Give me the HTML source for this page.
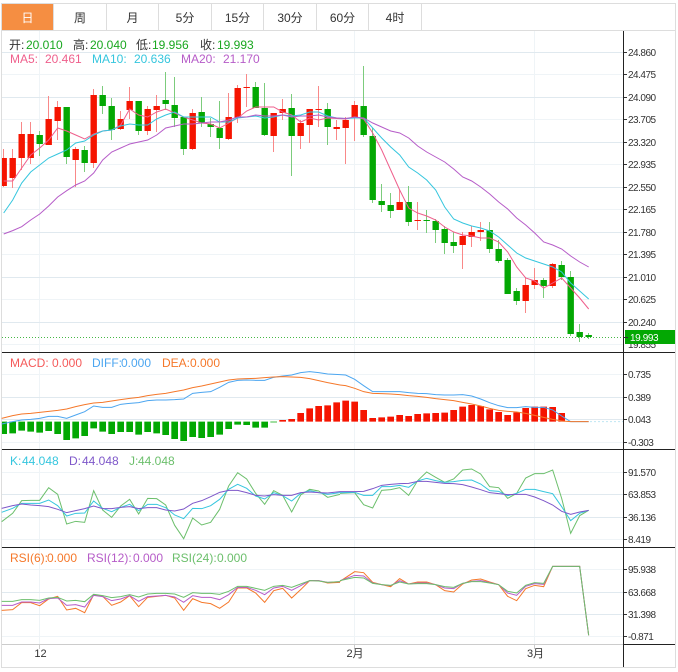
<!DOCTYPE html>
<html><head><meta charset="utf-8"><style>
html,body{margin:0;padding:0;background:#fff;width:678px;height:672px;overflow:hidden}
svg{display:block;font-family:"Liberation Sans","Noto Sans CJK SC",sans-serif}
.a text{font-size:10px;letter-spacing:-.5px;fill:#333}
.h text{font-size:12px}
.t text{font-size:12px;fill:#333;text-anchor:middle}
.l{fill:none}
</style></head><body>
<svg width="678" height="672" viewBox="0 0 678 672" xmlns="http://www.w3.org/2000/svg">
<!-- frame -->
<rect x="1.5" y="3.5" width="674" height="664" fill="#fff" stroke="#ddd"/>
<!-- tabs -->
<rect x="2" y="4" width="51" height="26" fill="#f58e42"/>
<path d="M53.5 4V30M106.5 4V30M158.5 4V30M211.5 4V30M263.5 4V30M316.5 4V30M368.5 4V30M421.5 4V30M2 30.5H675" stroke="#ddd" fill="none"/>
<g class="t">
<text x="27.5" y="22" style="fill:#fff">日</text><text x="80" y="22">周</text><text x="132.5" y="22">月</text><text x="185" y="22">5分</text><text x="237.5" y="22">15分</text><text x="290" y="22">30分</text><text x="342.5" y="22">60分</text><text x="395" y="22">4时</text>
</g>
<!-- grid -->
<path d="M39.5 31V645M354.5 31V645M534.5 31V645M2 74.5H623M2 119.5H623M2 164.5H623M2 209.5H623M2 254.5H623M2 299.5H623M2 344.5H623M2 374.5H623M2 442.5H623M2 472.5H623M2 539.5H623M2 569.5H623M2 636.5H623" stroke="#eff4f7" fill="none"/>
<path d="M2 52.5H623M2 97.5H623M2 142.5H623M2 187.5H623M2 232.5H623M2 277.5H623M2 322.5H623M2 397.5H623M2 419.5H623M2 494.5H623M2 517.5H623M2 592.5H623M2 614.5H623" stroke="#e0e9ef" fill="none"/>
<!-- wicks -->
<path stroke="#f98888" fill="none" d="M3.5 149V187M12.5 149V188M21.5 122V170M30.5 122V164M48.5 96V145M57.5 101V140M75.5 147V187M93.5 89V168M120.5 111V130M129.5 87V119M147.5 106V135M156.5 95V132M192.5 109V150M228.5 93V140M237.5 85V123M246.5 74V107M273.5 113V152M282.5 99V120M300.5 120V149M309.5 109V143M318.5 86V127M336.5 120V140M345.5 117V164M354.5 101V141M399.5 190V210M417.5 202V230M462.5 232V269M471.5 226V247M480.5 222V241M525.5 277V313M534.5 268V289M552.5 263V288"/>
<path stroke="#7ccc7c" fill="none" d="M39.5 131V156M66.5 107V164M84.5 146V172M102.5 86V114M111.5 98V140M138.5 101V135M165.5 72V110M174.5 77V127M183.5 117V155M201.5 97V127M210.5 118V137M219.5 101V149M255.5 82V108M264.5 83V136M291.5 94V176M327.5 103V145M363.5 66V137M372.5 128V203M381.5 184V212M390.5 193V218M408.5 186V226M426.5 210V233M435.5 219V243M444.5 226V254M453.5 232V253M489.5 222V253M498.5 240V263M507.5 258V294M516.5 288V305M543.5 278V298M561.5 261V280M570.5 271V336M579.5 324V342M588.5 333V339"/>
<!-- bodies -->
<path fill="#f51400" d="M2 158H6.9V186H2zM9.5 158h6.4V178h-6.4zM18.5 134h6.4V158h-6.4zM27.5 134h6.4V158h-6.4zM45.5 119h6.4V145h-6.4zM54.5 107h6.4V121h-6.4zM72.5 149h6.4V160h-6.4zM90.5 95h6.4V163h-6.4zM117.5 119h6.4V129h-6.4zM126.5 101h6.4V110h-6.4zM144.5 109h6.4V131h-6.4zM153.5 106h6.4V110h-6.4zM189.5 113h6.4V149h-6.4zM225.5 117h6.4V139h-6.4zM234.5 88h6.4V118h-6.4zM243.5 87h6.4V88h-6.4zM270.5 113h6.4V136h-6.4zM279.5 109h6.4V113h-6.4zM297.5 123h6.4V136h-6.4zM306.5 109h6.4V125h-6.4zM315.5 109h6.4V110h-6.4zM333.5 127h6.4V129h-6.4zM342.5 120h6.4V128h-6.4zM351.5 105h6.4V118h-6.4zM396.5 202h6.4V210h-6.4zM414.5 220h6.4V221h-6.4zM459.5 236h6.4V245h-6.4zM468.5 232h6.4V237h-6.4zM477.5 230h6.4V232h-6.4zM522.5 285h6.4V301h-6.4zM531.5 280h6.4V285h-6.4zM549.5 264h6.4V286h-6.4z"/>
<path fill="#03a803" d="M36.5 135h6.4V144h-6.4zM63.5 107h6.4V157h-6.4zM81.5 150h6.4V163h-6.4zM99.5 95h6.4V106h-6.4zM108.5 106h6.4V130h-6.4zM135.5 101h6.4V131h-6.4zM162.5 100h6.4V104h-6.4zM171.5 105h6.4V118h-6.4zM180.5 117h6.4V149h-6.4zM198.5 112h6.4V123h-6.4zM207.5 124h6.4V127h-6.4zM216.5 128h6.4V138h-6.4zM252.5 87h6.4V108h-6.4zM261.5 108h6.4V135h-6.4zM288.5 108h6.4V136h-6.4zM324.5 109h6.4V127h-6.4zM360.5 106h6.4V135h-6.4zM369.5 136h6.4V200h-6.4zM378.5 201h6.4V205h-6.4zM387.5 205h6.4V211h-6.4zM405.5 202h6.4V222h-6.4zM423.5 220h6.4V221h-6.4zM432.5 221h6.4V230h-6.4zM441.5 229h6.4V243h-6.4zM450.5 242h6.4V246h-6.4zM486.5 230h6.4V249h-6.4zM495.5 249h6.4V261h-6.4zM504.5 260h6.4V294h-6.4zM513.5 291h6.4V301h-6.4zM540.5 280h6.4V286h-6.4zM558.5 265h6.4V277h-6.4zM567.5 277h6.4V334h-6.4zM576.5 332h6.4V337h-6.4zM585.5 335h6.4V337h-6.4z"/>
<!-- MA -->
<g class="l" stroke-width="1">
<polyline stroke="#ef5f8c" points="3.7,181 12.7,181 21.7,168 30.7,155 39.7,148 48.7,140 57.7,128 66.7,131 75.7,135 84.7,139 93.7,134 102.7,131 111.7,130 120.7,125 129.7,109 138.7,115 147.7,117 156.7,112 165.7,109 174.7,113 183.7,117 192.7,120 201.7,123 210.7,124 219.7,128 228.7,123 237.7,118 246.7,111 255.7,107 264.7,107 273.7,107 282.7,112 291.7,115 300.7,122 309.7,118 318.7,120 327.7,118 336.7,118.5 345.7,119 354.7,117 363.7,119 372.7,133 381.7,150 390.7,170 399.7,190 408.7,208 417.7,213 426.7,216 435.7,220 444.7,227 453.7,232 462.7,235 471.7,236 480.7,238 489.7,238 498.7,242 507.7,252 516.7,267 525.7,278 534.7,281 543.7,288 552.7,283 561.7,278 570.7,288 579.7,298 588.7,309"/>
<polyline stroke="#35c6de" points="3.7,213 12.7,200 21.7,183 30.7,172 39.7,165 48.7,158 57.7,154 66.7,150 75.7,143 84.7,141 93.7,135 102.7,131 111.7,130 120.7,126 129.7,124 138.7,125 147.7,125 156.7,119 165.7,115 174.7,112 183.7,117 192.7,117 201.7,117 210.7,117 219.7,122 228.7,122 237.7,118 246.7,117 255.7,116 264.7,118 273.7,117 282.7,115 291.7,116 300.7,115 309.7,112 318.7,112 327.7,116 336.7,118 345.7,118.5 354.7,118 363.7,118 372.7,128 381.7,138 390.7,147 399.7,155 408.7,167 417.7,173 426.7,180 435.7,190 444.7,207 453.7,219 462.7,223 471.7,226 480.7,228 489.7,231 498.7,237 507.7,245 516.7,253 525.7,258 534.7,261 543.7,264 552.7,267 561.7,272 570.7,283 579.7,291 588.7,299"/>
<polyline stroke="#b65cc8" points="3.7,234 12.7,230.6 21.7,226.7 30.7,220 39.7,214 48.7,206 57.7,197 66.7,190.7 75.7,185 84.7,181 93.7,173 102.7,160 111.7,152 120.7,148 129.7,144 138.7,142 147.7,140 156.7,135 165.7,128 174.7,126 183.7,124 192.7,124 201.7,123 210.7,122 219.7,122 228.7,120 237.7,117 246.7,117 255.7,115 264.7,116 273.7,116 282.7,115 291.7,117 300.7,116 309.7,116 318.7,115 327.7,117 336.7,118 345.7,118.5 354.7,117 363.7,118 372.7,123 381.7,127 390.7,131 399.7,133 408.7,138 417.7,146 426.7,152 435.7,157 444.7,162 453.7,169 462.7,177 471.7,181 480.7,187 489.7,194 498.7,202 507.7,209 516.7,218 525.7,225 534.7,233 543.7,242 552.7,245 561.7,249 570.7,256 579.7,262 588.7,267"/>
</g>
<!-- last price dotted -->
<path d="M2 337.5H623" stroke="#45b845" stroke-dasharray="1 2" fill="none"/>
<!-- MACD histogram + lines -->
<g transform="translate(0,350) scale(.33333)">
<path fill="#03a803" d="M6 215H21V252H6zM28 215h20V250H28zM55 215h20V242H55zM82 215h20V245H82zM109 215h20V248H109zM136 215h20V243H136zM163 215h20V252H163zM190 215h20V270H190zM217 215h20V265H217zM244 215h20V258H244zM271 215h20V235H271zM298 215h20V245H298zM325 215h20V252H325zM352 215h20V246H352zM379 215h20V246H379zM406 215h20V254H406zM433 215h20V246H433zM460 215h20V250H460zM487 215h20V255H487zM514 215h20V267H514zM541 215h20V273H541zM568 215h20V261H568zM595 215h20V264H595zM622 215h20V261H622zM649 215h20V254H649zM676 215h20V237H676zM703 215h20V224H703zM730 215h20V225H730zM757 215h20V233H757zM784 215h20V233H784zM811 215h20V217H811z"/>
<path fill="#f51400" d="M838 210h20V215H838zM865 207h20V215H865zM892 189h20V215H892zM919 175h20V215H919zM946 168h20V215H946zM973 166h20V215H973zM1000 157h20V215H1000z"/>
<polyline class="l" stroke="#4ca6f0" stroke-width="3" points="5,222 38,215 65,210 92,208 119,205 146,199 173,199 200,205 227,195 254,185 281,168 308,172 335,172 362,163 389,160 416,158 443,152 470,150 497,150 524,149 551,147 578,130 605,127 632,125 659,112 686,97 713,91 740,90 767,91 794,91 821,82 848,78 875,75 902,68 929,65 956,68 983,72 1020,74"/>
<polyline class="l" stroke="#f5782a" stroke-width="3" points="5,205 38,197 65,192 92,190 119,187 146,184 173,181 200,177 227,170 254,164 281,159 308,157 335,153 362,149 389,145 416,142 443,137 470,133 497,130 524,125 551,120 578,113 605,108 632,102 659,96 686,90 713,87 740,86 767,85 794,83 821,81 848,80 875,81 902,82 929,86 956,92 983,98 1020,105"/>
</g>
<g transform="translate(340,350) scale(.33333)">
<path fill="#f51400" d="M7 152h20V215H7zM34 155h20V215H34zM61 180h20V215H61zM88 204h20V215H88zM115 202h20V215H115zM142 200h20V215H142zM169 195h20V215H169zM196 198h20V215H196zM223 192h20V215H223zM250 190h20V215H250zM277 189h20V215H277zM304 188h20V215H304zM331 180h20V215H331zM358 170h20V215H358zM385 165h20V215H385zM412 168h20V215H412zM439 178h20V215H439zM466 186h20V215H466zM493 195h20V215H493zM520 187h20V215H520zM547 174h20V215H547zM574 170h20V215H574zM601 170h20V215H601zM628 171h20V215H628zM655 189h20V215H655z"/>
<polyline class="l" stroke="#4ca6f0" stroke-width="3" points="0,74 17,75 44,88 71,107 98,125 125,125 152,125 179,125 206,128 233,130 260,131 287,134 314,135 341,135 368,134 395,138 422,147 449,158 476,167 503,173 530,173 557,170 584,172 611,172 638,180 665,198 692,215 719,215 746,215"/>
<polyline class="l" stroke="#f5782a" stroke-width="3" points="0,105 17,107 44,115 71,125 98,130 125,131 152,132 179,134 206,137 233,139 260,142 287,146 314,149 341,152 368,157 395,162 422,168 449,175 476,181 503,184 530,186 557,190 584,196 611,202 638,208 665,213 692,215 719,215 746,215"/>
<path d="M750 215H850" stroke="#bfe6f3" stroke-width="3" stroke-dasharray="6 6" fill="none"/>
</g>
<!-- KDJ -->
<g class="l" stroke-width="3" transform="translate(0,450) scale(.33333)">
<polyline stroke="#6cbf6c" points="5,215 38,190 65,152 92,151 119,151 146,113 173,133 200,222 227,214 254,217 281,122 308,180 335,202 362,168 389,148 416,192 443,145 470,146 497,165 524,226 551,266 578,204 605,225 632,217 659,178 686,108 713,68 740,87 767,130 794,163 821,122 848,136 875,186 902,135 929,118 956,123 983,142 1020,133"/>
<polyline stroke="#35c6de" points="5,187 38,175 65,160 92,160 119,160 146,150 173,167 200,198 227,190 254,189 281,153 308,175 335,185 362,172 389,163 416,182 443,163 470,163 497,173 524,195 551,206 578,175 605,176 632,167 659,148 686,118 713,103 740,115 767,138 794,147 821,128 848,137 875,153 902,130 929,122 956,128 983,133 1020,128"/>
<polyline stroke="#7e57c9" points="5,175 38,167 65,162 92,165 119,167 146,170 173,178 200,188 227,182 254,176 281,168 308,176 335,176 362,172 389,170 416,176 443,173 470,173 497,180 524,183 551,177 578,160 605,152 632,140 659,127 686,121 713,121 740,128 767,136 794,138 821,134 848,136 875,136 902,128 929,126 956,128 983,129 1020,125"/>
</g>
<g class="l" stroke-width="3" transform="translate(340,450) scale(.33333)">
<polyline stroke="#6cbf6c" points="0,130 44,128 71,164 98,174 125,121 152,119 179,113 206,136 233,92 260,66 287,82 314,97 341,87 368,60 395,57 422,72 449,110 476,113 503,145 530,130 557,84 584,71 611,71 638,60 665,145 692,250 719,197 746,181"/>
<polyline stroke="#35c6de" points="0,128 44,127 71,136 98,136 125,110 152,110 179,106 206,112 233,93 260,85 287,92 314,97 341,95 368,91 395,90 422,102 449,122 476,124 503,137 530,130 557,118 584,118 611,125 638,131 665,170 692,212 719,190 746,181"/>
<polyline stroke="#7e57c9" points="0,125 44,125 71,124 98,116 125,106 152,103 179,101 206,100 233,94 260,94 287,97 314,100 341,101 368,104 395,111 422,119 449,128 476,131 503,134 530,133 557,133 584,141 611,152 638,165 665,184 692,193 719,186 746,181"/>
</g>
<!-- RSI -->
<g class="l" stroke-width="3" transform="translate(0,548) scale(.33333)">
<polyline stroke="#f5782a" points="5,187 38,185 65,164 92,164 119,173 146,153 173,145 200,186 227,181 254,194 281,140 308,145 335,172 362,162 389,143 416,176 443,148 470,145 497,142 524,150 551,187 578,152 605,163 632,167 659,181 686,162 713,120 740,120 767,135 794,163 821,128 848,121 875,150 902,125 929,98 956,98 983,105 1020,103"/>
<polyline stroke="#b65cc8" points="5,172 38,172 65,162 92,162 119,165 146,152 173,150 200,172 227,170 254,177 281,142 308,146 335,158 362,153 389,143 416,160 443,146 470,144 497,142 524,147 551,163 578,143 605,148 632,148 659,155 686,140 713,118 740,118 767,127 794,140 821,120 848,115 875,127 902,113 929,98 956,98 983,103 1020,101"/>
<polyline stroke="#6cbf6c" points="5,160 38,160 65,155 92,155 119,157 146,150 173,148 200,159 227,157 254,161 281,139 308,143 335,149 362,146 389,140 416,147 443,138 470,136 497,136 524,138 551,148 578,134 605,136 632,136 659,139 686,130 713,115 740,115 767,121 794,127 821,115 848,112 875,118 902,108 929,98 956,99 983,103 1020,101"/>
</g>
<g class="l" stroke-width="3" transform="translate(340,548) scale(.33333)">
<polyline stroke="#f5782a" points="0,100 44,71 71,74 98,103 125,110 152,116 179,92 206,108 233,102 260,102 287,110 314,128 341,132 368,108 395,96 422,93 449,102 476,110 503,145 530,158 557,122 584,112 611,116 638,55 665,55 692,55 719,55 746,262"/>
<polyline stroke="#b65cc8" points="0,98 44,82 71,84 98,105 125,110 152,113 179,98 206,108 233,105 260,105 287,110 314,120 341,122 368,106 395,100 422,98 449,104 476,110 503,135 530,142 557,115 584,107 611,109 638,55 665,55 692,55 719,55 746,262"/>
<polyline stroke="#6cbf6c" points="0,98 44,88 71,90 98,106 125,110 152,112 179,102 206,108 233,107 260,107 287,110 314,116 341,118 368,106 395,101 422,101 449,105 476,110 503,130 530,135 557,112 584,104 611,106 638,55 665,55 692,55 719,55 746,262"/>
</g>
<!-- axes -->
<path d="M2 352.5H675M2 449.5H675M2 547.5H675M623.5 31V667M623 644.5H675" stroke="#222" fill="none"/>
<path d="M2 644.5H623M39.5 645V649M354.5 645V649M534.5 645V649" stroke="#ccc" fill="none"/>
<path d="M624 52.5h3M624 74.5h3M624 97.5h3M624 119.5h3M624 142.5h3M624 164.5h3M624 187.5h3M624 209.5h3M624 232.5h3M624 254.5h3M624 277.5h3M624 299.5h3M624 322.5h3M624 374.5h3M624 397.5h3M624 419.5h3M624 442.5h3M624 472.5h3M624 494.5h3M624 517.5h3M624 539.5h3M624 569.5h3M624 592.5h3M624 614.5h3M624 636.5h3" stroke="#333" fill="none"/>
<g class="a">
<text x="628" y="56">24.860</text><text x="628" y="78">24.475</text><text x="628" y="101">24.090</text><text x="628" y="123">23.705</text><text x="628" y="146">23.320</text><text x="628" y="168">22.935</text><text x="628" y="191">22.550</text><text x="628" y="213">22.165</text><text x="628" y="236">21.780</text><text x="628" y="258">21.395</text><text x="628" y="281">21.010</text><text x="628" y="303">20.625</text><text x="628" y="326">20.240</text><text x="628" y="348">19.855</text>
<text x="628" y="378">0.735</text><text x="628" y="401">0.389</text><text x="628" y="423">0.043</text><text x="628" y="446">-0.303</text>
<text x="628" y="476">91.570</text><text x="628" y="498">63.853</text><text x="628" y="521">36.136</text><text x="628" y="543">8.419</text>
<text x="628" y="573">95.938</text><text x="628" y="596">63.668</text><text x="628" y="618">31.398</text><text x="628" y="640">-0.871</text>
</g>
<!-- last price tag -->
<rect x="625" y="330" width="50" height="14" fill="#03a803"/>
<path d="M624 337.5h4" stroke="#333"/>
<text x="630" y="341" font-size="10" letter-spacing="-.4" fill="#fff">19.993</text>
<!-- x labels -->
<g class="t" style="font-size:11px">
<text x="40.5" y="657" style="font-size:11px">12</text><text x="355" y="657" style="font-size:11px">2月</text><text x="535.5" y="657" style="font-size:11px">3月</text>
</g>
<!-- headers -->
<path d="M2 52.5H30" stroke="#e0e9ef" fill="none"/>
<g class="h">
<text x="9" y="49" fill="#333">开:</text><text x="26" y="49" fill="#19a71f">20.010</text>
<text x="73" y="49" fill="#333">高:</text><text x="90" y="49" fill="#19a71f">20.040</text>
<text x="136" y="49" fill="#333">低:</text><text x="152" y="49" fill="#19a71f">19.956</text>
<text x="200" y="49" fill="#333">收:</text><text x="217" y="49" fill="#19a71f">19.993</text>
<text x="10" y="63" fill="#ef5f8c">MA5:</text><text x="45" y="63" fill="#ef5f8c">20.461</text>
<text x="92" y="63" fill="#35c6de">MA10:</text><text x="134" y="63" fill="#35c6de">20.636</text>
<text x="181" y="63" fill="#b65cc8">MA20:</text><text x="223" y="63" fill="#b65cc8">21.170</text>
<text x="10" y="367" fill="#f55a5a">MACD:</text><text x="52" y="367" fill="#f55a5a">0.000</text>
<text x="92" y="367" fill="#4ca6f0">DIFF:</text><text x="121" y="367" fill="#4ca6f0">0.000</text>
<text x="162" y="367" fill="#f5782a">DEA:</text><text x="190" y="367" fill="#f5782a">0.000</text>
<text x="10" y="465" fill="#35c6de">K:</text><text x="22" y="465" fill="#35c6de">44.048</text>
<text x="69" y="465" fill="#7e57c9">D:</text><text x="82" y="465" fill="#7e57c9">44.048</text>
<text x="129" y="465" fill="#6cbf6c">J:</text><text x="138" y="465" fill="#6cbf6c">44.048</text>
<text x="10" y="562" fill="#f5782a">RSI(6):</text><text x="47" y="562" fill="#f5782a">0.000</text>
<text x="87" y="562" fill="#b65cc8">RSI(12):</text><text x="133" y="562" fill="#b65cc8">0.000</text>
<text x="172" y="562" fill="#6cbf6c">RSI(24):</text><text x="217" y="562" fill="#6cbf6c">0.000</text>
</g>
</svg>
</body></html>
